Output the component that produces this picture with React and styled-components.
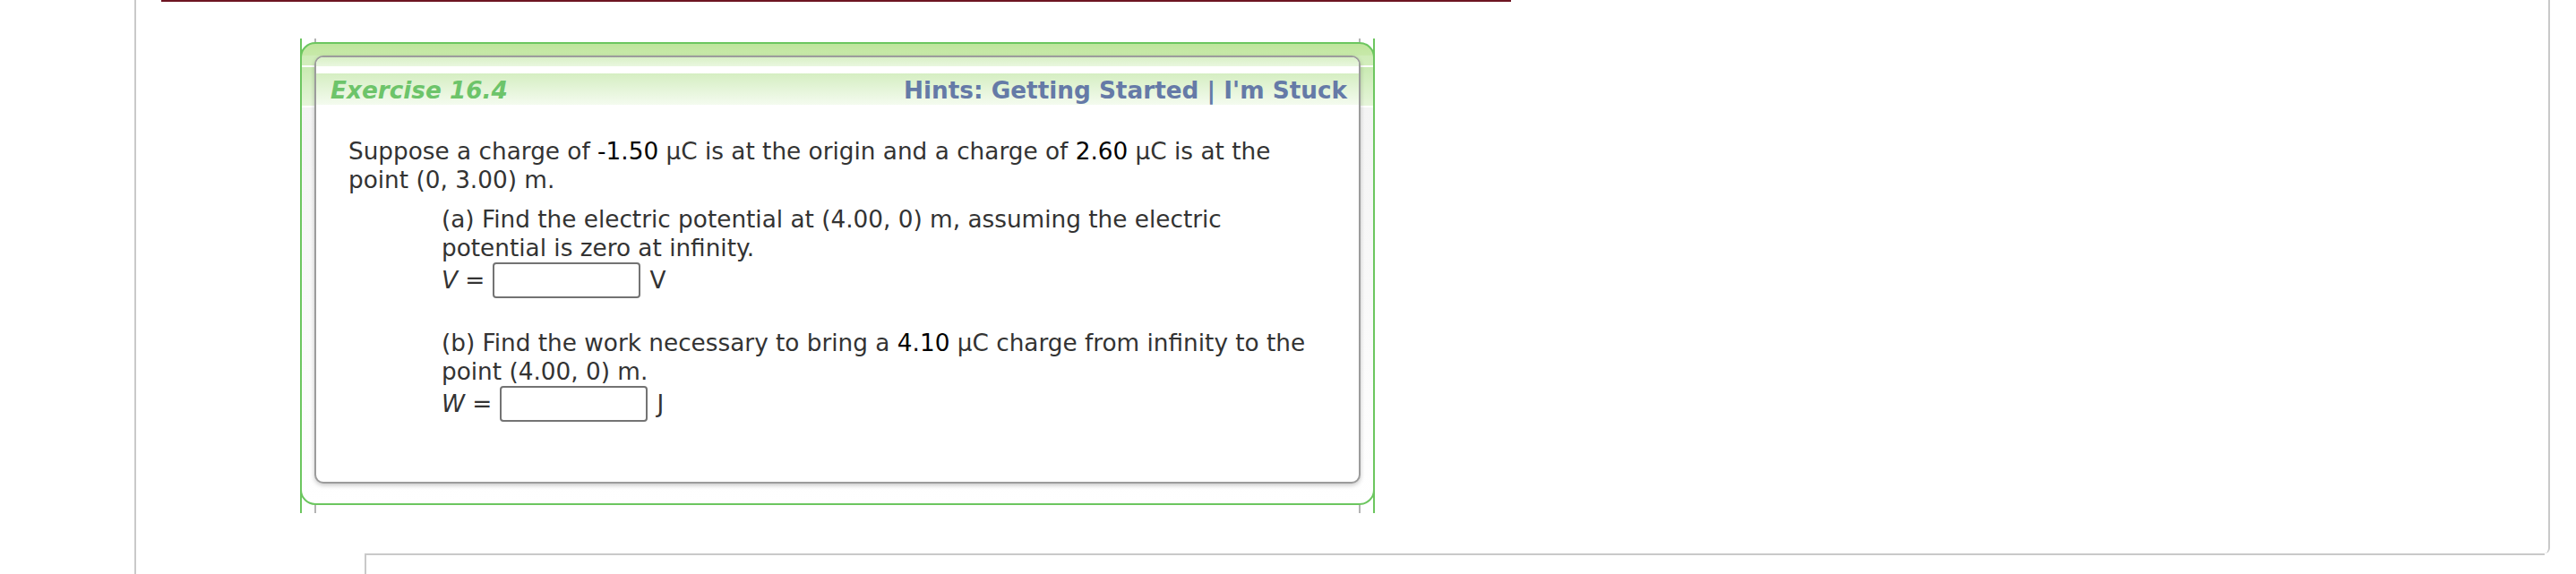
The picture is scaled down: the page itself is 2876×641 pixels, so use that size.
import React from "react";
import styled, { createGlobalStyle } from "styled-components";

const GREEN = "#6cc65f";
const LINE = "#c9c9c9";

const GlobalStyle = createGlobalStyle`
  html, body {
    margin: 0;
    padding: 0;
    background: #ffffff;
    overflow: hidden;
  }
  body {
    font-family: "DejaVu Sans", Verdana, sans-serif;
  }
`;

const Main = styled.div`
  margin-left: 150px;
  border-left: 2px solid ${LINE};
  height: 641px;
  display: flex;
  flex-direction: column;
`;

const Panel = styled.div`
  margin-right: 29px;
  border-right: 2px solid ${LINE};
  border-bottom-right-radius: 6px;
  padding-bottom: 45px;
`;

const Rule = styled.div`
  margin-left: 28px;
  width: 1507px;
  height: 2px;
  background: #6d1422;
`;

const Column = styled.div`
  margin: 41px 0 0 183px;
  width: 1196px;
  border-left: 2px solid ${GREEN};
  border-right: 2px solid ${GREEN};
`;

const Stub = styled.div`
  height: ${(p) => p.$h}px;
  margin: 0 14px;
  border-left: 2px solid #b4b4b4;
  border-right: 2px solid #b4b4b4;
`;

const Frame = styled.div`
  margin: 0 -2px;
  border: 2px solid ${GREEN};
  border-radius: 17px;
  padding: 13px 14px 22px 14px;
  background: linear-gradient(
    to bottom,
    #bfe59c 0,
    #c8e9aa 13px,
    #cfecb8 13px,
    #d3eebd 24px,
    #ffffff 24px,
    #ffffff 26px,
    #c9eab2 26px,
    #e6f5da 69px,
    #ffffff 69px,
    #ffffff 71px,
    #f4f4f4 71px,
    #ffffff 100%
  );
`;

const Inner = styled.div`
  border: 2px solid #9c9c9c;
  border-radius: 10px;
  background: #ffffff;
  overflow: hidden;
  box-shadow: 0 2px 5px rgba(0, 0, 0, 0.22);
`;

const TopStrip = styled.div`
  height: 10px;
  background: linear-gradient(to bottom, #d9f0c7, #e9f7df);
`;

const Gap = styled.div`
  height: 8px;
  background: #ffffff;
`;

const Header = styled.div`
  box-sizing: border-box;
  height: 35px;
  padding: 3px 13px 0 16px;
  display: flex;
  align-items: center;
  justify-content: space-between;
  background: linear-gradient(to bottom, #d5eec2, #f4fbef);
  font-size: 26.3px;
  line-height: 30px;
  font-weight: bold;
  white-space: nowrap;
`;

const Title = styled.span`
  color: #6dc46a;
  font-style: italic;
`;

const Hints = styled.span`
  color: #657aa7;
`;

const HintLink = styled.a`
  color: inherit;
  text-decoration: none;
  cursor: pointer;
`;

const Body = styled.div`
  padding: 36px 42px 67px 36px;
  font-size: 26.3px;
  line-height: 32px;
  color: #333333;
`;

const Para = styled.p`
  margin: 0;
`;

const Part = styled.div`
  margin: ${(p) => p.$top}px 0 0 104px;
`;

const Num = styled.span`
  color: #000000;
`;

const AnswerRow = styled.div`
  display: flex;
  align-items: center;
  height: 40px;
`;

const Var = styled.span`
  font-style: italic;
`;

const AnswerBox = styled.input`
  box-sizing: border-box;
  width: 165px;
  height: 40px;
  margin: 0 10px 0 9px;
  padding: 0 6px;
  border: 2px solid #737373;
  border-radius: 4px;
  background: #ffffff;
  font: inherit;
  outline: none;
`;

const NextBox = styled.div`
  flex: 1;
  margin: 0 35px 0 255px;
  border-top: 2px solid ${LINE};
  border-left: 2px solid ${LINE};
`;

function Answer({ symbol, unit }) {
  return (
    <AnswerRow>
      <span>
        <Var>{symbol}</Var> =
      </span>
      <AnswerBox type="text" aria-label={symbol} />
      <span>{unit}</span>
    </AnswerRow>
  );
}

export default function App() {
  return (
    <>
      <GlobalStyle />
      <Main>
        <Panel>
          <Rule />
          <Column>
            <Stub $h={4} />
            <Frame>
              <Inner>
                <TopStrip />
                <Gap />
                <Header>
                  <Title>Exercise 16.4</Title>
                  <Hints>
                    Hints: <HintLink>Getting Started</HintLink> |{" "}
                    <HintLink>I'm Stuck</HintLink>
                  </Hints>
                </Header>
                <Body>
                  <Para>
                    Suppose a charge of <Num>-1.50</Num> µC is at the origin and a
                    charge of <Num>2.60</Num> µC is at the point (0, 3.00) m.
                  </Para>
                  <Part $top={12}>
                    <Para>
                      (a) Find the electric potential at (4.00, 0) m, assuming the
                      electric potential is zero at infinity.
                    </Para>
                    <Answer symbol="V" unit="V" />
                  </Part>
                  <Part $top={34}>
                    <Para>
                      (b) Find the work necessary to bring a <Num>4.10</Num> µC
                      charge from infinity to the point (4.00, 0) m.
                    </Para>
                    <Answer symbol="W" unit="J" />
                  </Part>
                </Body>
              </Inner>
            </Frame>
            <Stub $h={9} />
          </Column>
        </Panel>
        <NextBox />
      </Main>
    </>
  );
}
